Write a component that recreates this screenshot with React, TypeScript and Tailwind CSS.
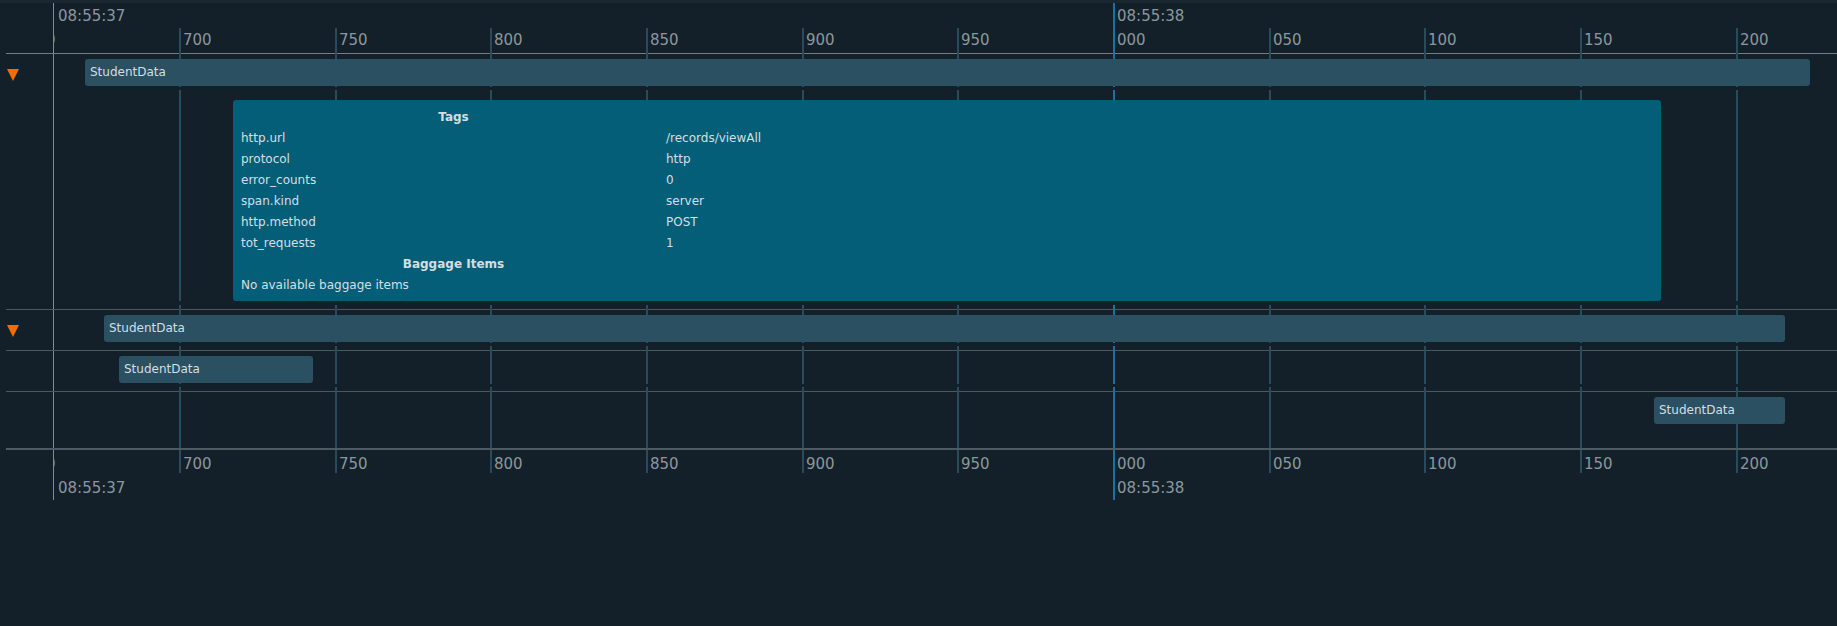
import React from "react";

const TICKS = [
  { x: -31, label: "650" },
  { x: 125, label: "700" },
  { x: 281, label: "750" },
  { x: 436, label: "800" },
  { x: 592, label: "850" },
  { x: 748, label: "900" },
  { x: 903, label: "950" },
  { x: 1059, label: "000", major: true },
  { x: 1215, label: "050" },
  { x: 1370, label: "100" },
  { x: 1526, label: "150" },
  { x: 1682, label: "200" },
];

const TAGS = [
  ["http.url", "/records/viewAll"],
  ["protocol", "http"],
  ["error_counts", "0"],
  ["span.kind", "server"],
  ["http.method", "POST"],
  ["tot_requests", "1"],
];

function TickLines({ className }: { className: string }) {
  return (
    <div className={`absolute left-0 right-0 pointer-events-none ${className}`}>
      {TICKS.filter((t) => t.x > 0).map((t) => (
        <div
          key={t.label}
          className={`absolute top-0 bottom-0 w-[2px] ${t.major ? "bg-[#1872a5]" : "bg-[#2a4b5e]"}`}
          style={{ left: t.x }}
        />
      ))}
    </div>
  );
}

function Caret() {
  return (
    <svg width="12" height="12" viewBox="0 0 12 12" className="ml-[1px] mt-[15px]">
      <polygon points="0,0 12,0 6,12" fill="#f26e00" />
    </svg>
  );
}

function Axis({ bottom }: { bottom?: boolean }) {
  return (
    <div className="flex h-[50px]">
      <div className="w-[47px]" />
      <div className="relative flex-1 overflow-hidden border-l border-[#7f8c93]">
        {TICKS.map((t) => (
          <React.Fragment key={t.label}>
            {t.x > 0 && (
              <div
                className={`absolute w-[2px] ${
                  t.major
                    ? "top-0 bottom-0 bg-[#1872a5]"
                    : bottom
                    ? "top-0 h-[23px] bg-[#2a4b5e]"
                    : "top-[25px] bottom-0 bg-[#2a4b5e]"
                }`}
                style={{ left: t.x }}
              />
            )}
            <div
              className={`absolute text-[15px] leading-[15px] text-[#8b979d] ${bottom ? "top-[7px]" : "top-[30px]"}`}
              style={{ left: t.x + 4 }}
            >
              {t.label}
            </div>
          </React.Fragment>
        ))}
        <div
          className={`absolute left-[4px] text-[15px] leading-[15px] text-[#8b979d] ${bottom ? "top-[31px]" : "top-[6px]"}`}
        >
          08:55:37
        </div>
        <div
          className={`absolute left-[1063px] text-[15px] leading-[15px] text-[#8b979d] ${bottom ? "top-[31px]" : "top-[6px]"}`}
        >
          08:55:38
        </div>
      </div>
    </div>
  );
}

function SpanRow({
  caret,
  left,
  width,
  tall,
  border = "border-[#4a5961]",
}: {
  caret?: boolean;
  left: number;
  width: number;
  tall?: boolean;
  border?: string;
}) {
  return (
    <div className={`flex border-t ${border} ${tall ? "h-[57px]" : "h-[41px]"}`}>
      <div className="w-[47px]">{caret && <Caret />}</div>
      <div className="relative flex-1 border-l border-[#7f8c93]">
        <TickLines className={tall ? "top-[-5px] bottom-0" : "top-[-5px] bottom-[7px]"} />
        <div
          className="absolute top-[5px] h-[27px] rounded-[3px] bg-[#2a5062] pl-[5px] text-[12px] leading-[27px] text-[#d3dee3]"
          style={{ left, width }}
        >
          StudentData
        </div>
      </div>
    </div>
  );
}

function DetailsRow() {
  return (
    <div className="flex h-[215px]">
      <div className="w-[47px]" />
      <div className="relative flex-1 border-l border-[#7f8c93]">
        <TickLines className="top-[-4px] bottom-[8px]" />
        <div className="relative ml-[179px] mt-[6px] h-[201px] w-[1428px] rounded-[3px] bg-[#055e78] px-[8px] pt-[7px] pb-[5px] text-[12px] leading-[21px] text-[#d3dee3]">
          <div className="grid grid-cols-[425px_1fr]">
            <div className="text-center font-bold">Tags</div>
            <div />
            {TAGS.map(([k, v]) => (
              <React.Fragment key={k}>
                <div>{k}</div>
                <div>{v}</div>
              </React.Fragment>
            ))}
            <div className="text-center font-bold">Baggage Items</div>
            <div />
            <div>No available baggage items</div>
            <div />
          </div>
        </div>
      </div>
    </div>
  );
}

export default function App() {
  return (
    <div className="h-[626px] w-[1837px] overflow-hidden bg-[#13202a] font-['DejaVu_Sans',sans-serif]">
      <div className="h-[3px] bg-[#1a2731]" />
      <div className="pl-[6px]">
        <Axis />
        <SpanRow caret left={31} width={1725} border="border-[#6f7d85]" />
        <DetailsRow />
        <SpanRow caret left={50} width={1681} />
        <SpanRow left={65} width={194} />
        <SpanRow left={1600} width={131} tall />
        <div className="h-[2px] bg-[#4d5b63]" />
        <Axis bottom />
      </div>
    </div>
  );
}
